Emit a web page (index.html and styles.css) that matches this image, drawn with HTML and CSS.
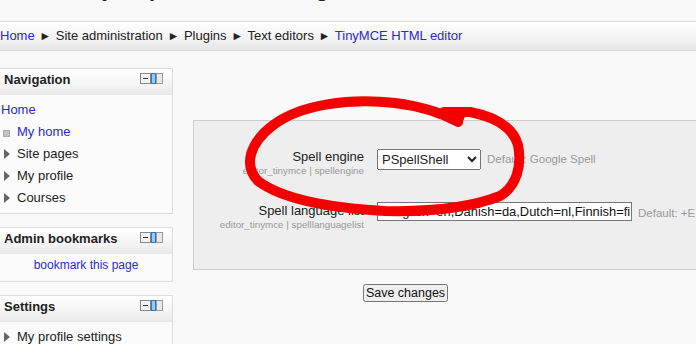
FILE: index.html
```html
<!DOCTYPE html>
<html lang="en">

<head>
    <meta charset="UTF-8">
    <title>TinyMCE HTML editor</title>
    <link rel="stylesheet" href="styles.css">
</head>

<body>
    <div class="page-header">
        <h1 class="site-title">SolutionZye Operators Training - Moodle</h1>
    </div>

    <div class="navbar">
        <a href="#">Home</a>
        <span class="sep">&#9658;</span> Site administration
        <span class="sep">&#9658;</span> Plugins
        <span class="sep">&#9658;</span> Text editors
        <span class="sep">&#9658;</span> <a href="#">TinyMCE HTML editor</a>
    </div>

    <div class="page">
        <aside class="side">
            <div class="block">
                <div class="block-header">
                    <h2>Navigation</h2>
                    <span class="block-controls">
                        <svg width="23" height="11" viewBox="0 0 23 11">
                            <rect x="0.5" y="0.5" width="10" height="10" fill="#f4f4f4" stroke="#888" />
                            <line x1="3" y1="5.5" x2="8" y2="5.5" stroke="#333" />
                            <rect x="11.5" y="0.5" width="4" height="10" fill="#9cc8ec" stroke="#2a78c8" />
                            <rect x="16.5" y="0.5" width="6" height="10" fill="#e8e8e8" stroke="#999" />
                        </svg>
                    </span>
                </div>
                <div class="block-content">
                    <a class="nav-root" href="#">Home</a>
                    <ul class="nav-list">
                        <li class="leaf"><a href="#">My home</a></li>
                        <li class="branch">Site pages</li>
                        <li class="branch">My profile</li>
                        <li class="branch">Courses</li>
                    </ul>
                </div>
            </div>

            <div class="block">
                <div class="block-header">
                    <h2>Admin bookmarks</h2>
                    <span class="block-controls">
                        <svg width="23" height="11" viewBox="0 0 23 11">
                            <rect x="0.5" y="0.5" width="10" height="10" fill="#f4f4f4" stroke="#888" />
                            <line x1="3" y1="5.5" x2="8" y2="5.5" stroke="#333" />
                            <rect x="11.5" y="0.5" width="4" height="10" fill="#9cc8ec" stroke="#2a78c8" />
                            <rect x="16.5" y="0.5" width="6" height="10" fill="#e8e8e8" stroke="#999" />
                        </svg>
                    </span>
                </div>
                <div class="block-content centered">
                    <a href="#">bookmark this page</a>
                </div>
            </div>

            <div class="block">
                <div class="block-header">
                    <h2>Settings</h2>
                    <span class="block-controls">
                        <svg width="23" height="11" viewBox="0 0 23 11">
                            <rect x="0.5" y="0.5" width="10" height="10" fill="#f4f4f4" stroke="#888" />
                            <line x1="3" y1="5.5" x2="8" y2="5.5" stroke="#333" />
                            <rect x="11.5" y="0.5" width="4" height="10" fill="#9cc8ec" stroke="#2a78c8" />
                            <rect x="16.5" y="0.5" width="6" height="10" fill="#e8e8e8" stroke="#999" />
                        </svg>
                    </span>
                </div>
                <div class="block-content">
                    <ul class="nav-list">
                        <li class="branch">My profile settings</li>
                    </ul>
                </div>
            </div>
        </aside>

        <main class="content">
            <form class="admin-form">
                <fieldset class="settings-box">
                    <div class="form-item">
                        <div class="form-label">
                            <label for="spellengine">Spell engine</label>
                            <span class="form-shortname">editor_tinymce | spellengine</span>
                        </div>
                        <div class="form-setting">
                            <select id="spellengine" class="form-select">
                                <option>PSpellShell</option>
                                <option>GoogleSpell</option>
                            </select>
                            <span class="form-defaultinfo">Default: Google Spell</span>
                        </div>
                    </div>

                    <div class="form-item">
                        <div class="form-label">
                            <label for="spelllanguagelist">Spell language list</label>
                            <span class="form-shortname">editor_tinymce | spelllanguagelist</span>
                        </div>
                        <div class="form-setting">
                            <input type="text" id="spelllanguagelist" class="form-text"
                                value="+English=en,Danish=da,Dutch=nl,Finnish=fi,French=fr,German=de,Italian=it">
                            <span class="form-defaultinfo">Default: +E</span>
                        </div>
                    </div>
                </fieldset>

                <div class="form-buttons">
                    <button type="submit" class="save-button">Save changes</button>
                </div>
            </form>
        </main>
    </div>

    <!-- red marker drawn over the screenshot -->
    <svg class="marker" width="696" height="344" viewBox="0 0 696 344">
        <path d="M458 122 C440 112 420 106 395 103 C350 98 300 104 272 126 C250 143 243 165 258 181
                 C282 199 330 208 385 211 C430 212 472 207 500 196 C517 186 522 165 518 145
                 C513 128 496 117 470 112 L444 112"
            fill="none" stroke="#f40000" stroke-width="10" stroke-linecap="round" stroke-linejoin="round" />
        <path d="M446 108 L462 124 L466 114 Z" fill="#f40000" />
    </svg>
</body>

</html>
```

FILE: styles.css
```css
/* Basic reset */
* {
    margin: 0;
    padding: 0;
    box-sizing: border-box;
}

body {
    font-family: 'Liberation Sans', Arial, sans-serif;
    font-size: 13px;
    color: #222222;
    background-color: #f9f9f9;
    width: 696px;
    height: 344px;
    overflow: hidden;
    position: relative;
}

a {
    color: #2a2ad4;
    text-decoration: none;
}

.page-header {
    height: 22px;
    overflow: hidden;
    border-bottom: 1px solid #dddddd;
}

.site-title {
    font-size: 22px;
    font-weight: 700;
    line-height: 26px;
    margin-top: -24px;
    color: #222222;
    white-space: nowrap;
}

.navbar {
    height: 29px;
    line-height: 27px;
    font-size: 13px;
    background: linear-gradient(to bottom, #ffffff 0%, #f2f2f2 60%, #e6e6e6 100%);
    border-bottom: 1px solid #d8d8d8;
    white-space: nowrap;
}

.navbar .sep {
    font-size: 12px;
    margin: 0 1px;
}

.page {
    display: flex;
    gap: 20px;
    padding-top: 17px;
}

.side {
    width: 174px;
    flex-shrink: 0;
    margin-left: -1px;
    display: flex;
    flex-direction: column;
    gap: 13px;
}

.block {
    background-color: #fbfbfb;
    border: 1px solid #dddddd;
}

.block-header {
    height: 26px;
    display: flex;
    align-items: flex-start;
    justify-content: space-between;
    padding: 3px 9px 0 4px;
    background: linear-gradient(to bottom, #ffffff 0%, #f4f4f4 60%, #e8e8e8 100%);
}

.block-header h2 {
    font-size: 13px;
    font-weight: 700;
    line-height: 16px;
    color: #222222;
}

.block-controls {
    display: flex;
    padding-top: 1px;
}

.block-content {
    padding: 4px 0 4px 0;
}

.block-content.centered {
    text-align: center;
    font-size: 12px;
    padding: 4px 0 9px;
}

.nav-root {
    display: block;
    line-height: 22px;
    margin-left: 1px;
}

.nav-list {
    list-style: none;
}

.nav-list li {
    line-height: 22px;
    padding-left: 17px;
    position: relative;
}

.nav-list li.leaf::before {
    content: "";
    position: absolute;
    left: 3px;
    top: 9px;
    width: 5px;
    height: 5px;
    background-color: #c4c4c4;
    border: 1px solid #aaaaaa;
}

.nav-list li.branch::before {
    content: "";
    position: absolute;
    left: 4px;
    top: 6px;
    border-left: 6px solid #666666;
    border-top: 5px solid transparent;
    border-bottom: 5px solid transparent;
}

.content {
    flex: 1;
    min-width: 0;
}

.settings-box {
    border: 1px solid #cccccc;
    border-right: none;
    background-color: #eeeeee;
    height: 150px;
    margin-top: 52px;
    padding-top: 27px;
    display: flex;
    flex-direction: column;
    gap: 26px;
}

.form-item {
    display: flex;
    gap: 13px;
}

.form-label {
    width: 170px;
    flex-shrink: 0;
    text-align: right;
    display: flex;
    flex-direction: column;
}

.form-label label {
    font-size: 13px;
    line-height: 17px;
    color: #222222;
}

.form-shortname {
    font-size: 9.8px;
    line-height: 11px;
    color: #999999;
    white-space: nowrap;
}

.form-setting {
    display: flex;
    align-items: flex-start;
    gap: 6px;
    white-space: nowrap;
}

.form-select {
    width: 104px;
    height: 21px;
    font-family: 'Liberation Sans', Arial, sans-serif;
    font-size: 13px;
    color: #222222;
    margin-top: 1px;
}

.form-text {
    width: 255px;
    height: 19px;
    font-family: 'Liberation Sans', Arial, sans-serif;
    font-size: 12.9px;
    color: #111111;
    border: 1px solid #767676;
    padding: 0 1px;
    background-color: #ffffff;
}

.form-defaultinfo {
    font-size: 11.5px;
    color: #999999;
    line-height: 22px;
}

.form-buttons {
    display: flex;
    justify-content: center;
    padding-top: 14px;
    padding-right: 78px;
}

.save-button {
    font-family: 'Liberation Sans', Arial, sans-serif;
    font-size: 12.5px;
    height: 18px;
    padding: 0 1px;
    color: #111111;
}

.marker {
    position: absolute;
    left: 0;
    top: 0;
    pointer-events: none;
}
```
